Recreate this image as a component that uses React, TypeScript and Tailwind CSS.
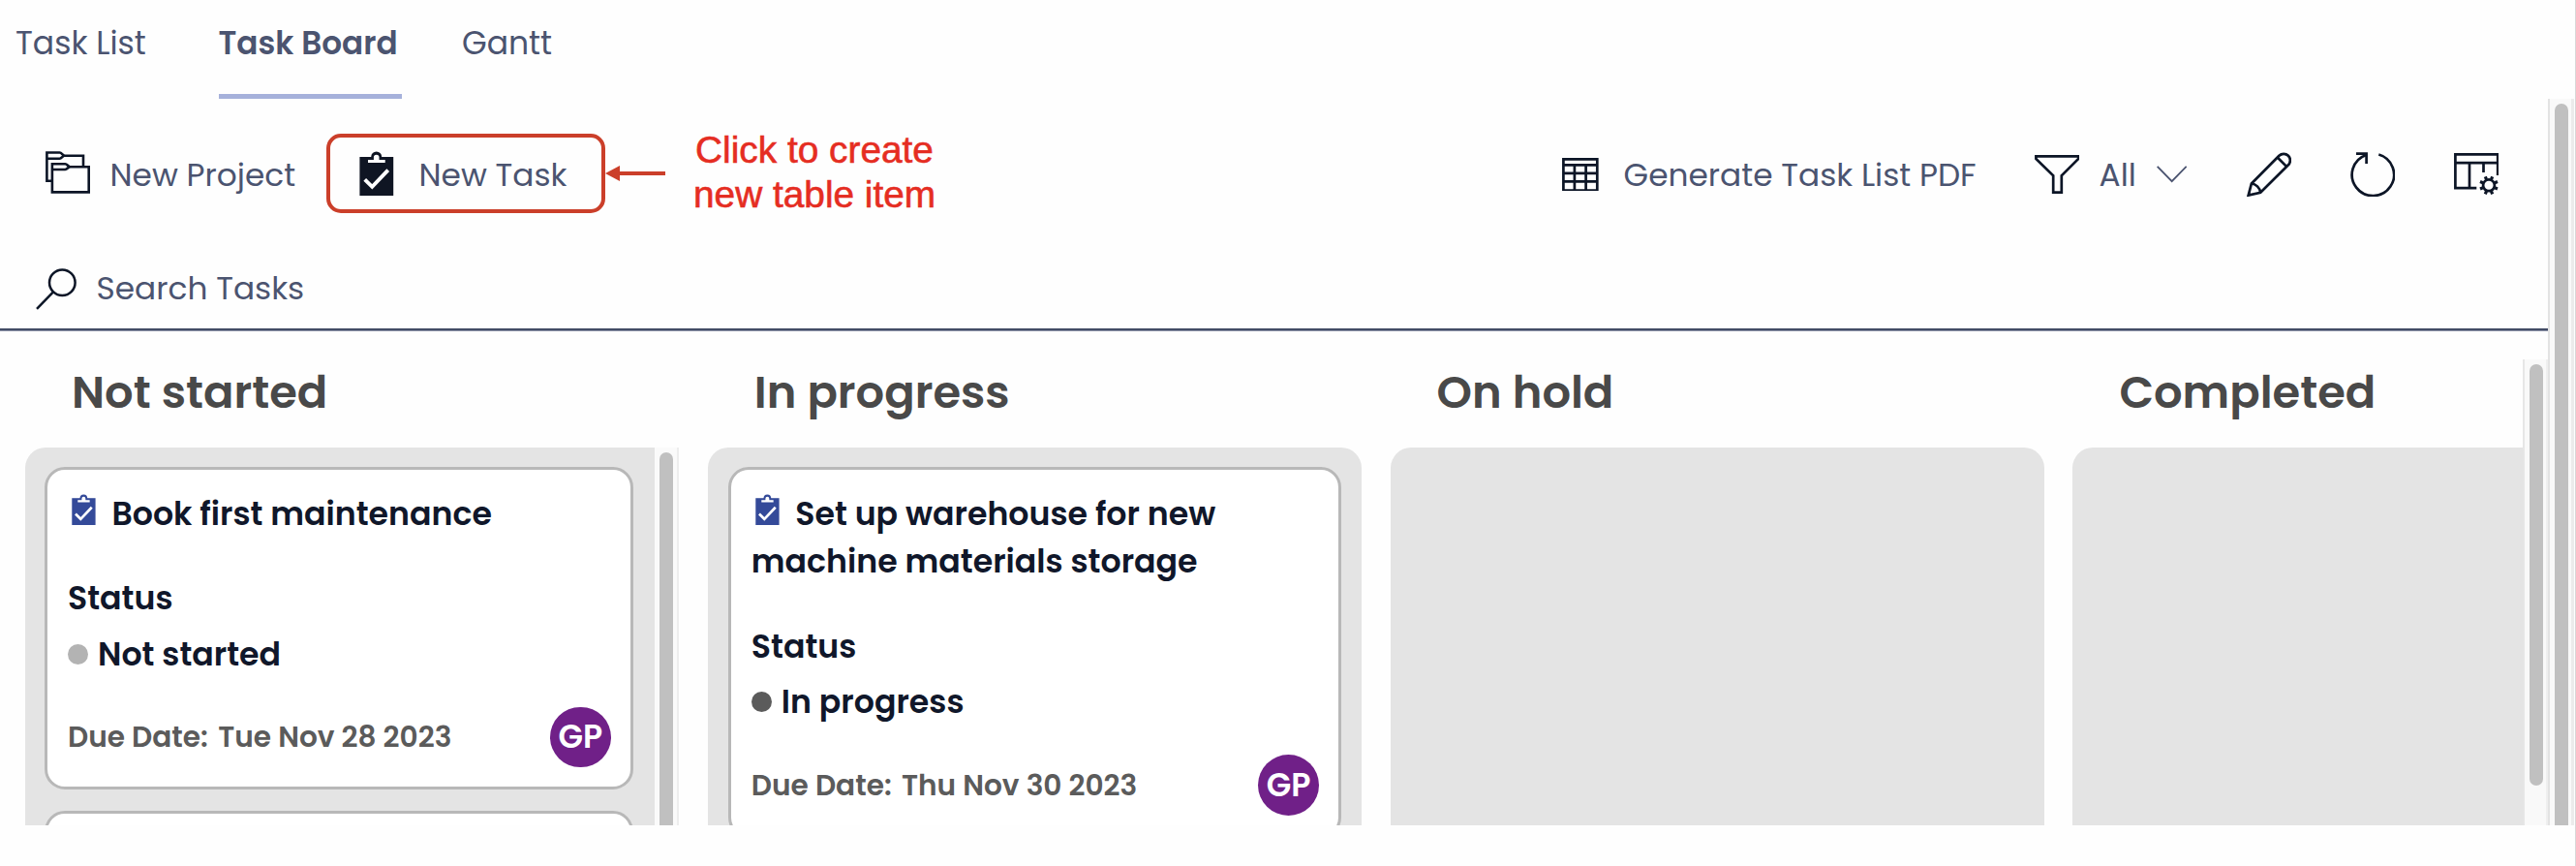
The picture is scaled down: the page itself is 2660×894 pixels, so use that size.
import type { ReactNode } from "react";

function ClipboardIcon({ className }: { className: string }) {
  return (
    <svg viewBox="0 0 35.5 46" className={className}>
      <rect x="0.4" y="6" width="34.8" height="40" fill="currentColor" />
      <path d="M12.2 6a5.5 5.5 0 0 1 11 0v4h-11z" fill="currentColor" />
      <path d="M9 12V9h5.9V6.6a2.8 2.8 0 0 1 5.6 0V9h6.2v3z" fill="#fff" />
      <path d="M5.7 29.3l7.6 7.6 16.4-17.3" fill="none" stroke="#fff" strokeWidth="3.8" />
    </svg>
  );
}

function FoldersIcon() {
  return (
    <svg viewBox="0 0 46 44" className="h-11 w-[46px]" fill="none" stroke="currentColor" strokeWidth="2.6">
      <path d="M6.7 30.8H1.4V1.5h13.2c2.2 0 3 3.2 5 3.2H39v10.8" />
      <path d="M1.4 7.7h13.2c2.2 0 3-3 5-3" />
      <path d="M6.9 13.2h13.4c2.2 0 3 3 5 3h19.4v26.2H6.9z" />
      <path d="M6.9 19h13.4c2.2 0 3-2.8 5-2.8" />
    </svg>
  );
}

function SearchIcon() {
  return (
    <svg viewBox="0 0 43 43" className="size-[43px]" fill="none" stroke="currentColor" strokeWidth="2.5">
      <circle cx="27.3" cy="14.7" r="13.3" />
      <path d="M18 24.3L1 41.8" />
    </svg>
  );
}

function TableIcon() {
  return (
    <svg viewBox="0 0 37.6 34.8" className="h-[34.8px] w-[37.6px]" fill="none" stroke="currentColor" strokeWidth="2.7">
      <path d="M1.4 1.4h34.9v32.1H1.400zM1.4 7.3h35M1.4 15.8h35M1.4 24.3h35M12.9 7.3v26.2M24.6 7.3v26.2" />
    </svg>
  );
}

function FilterIcon() {
  return (
    <svg viewBox="0 0 46.5 40" className="h-10 w-[46.5px]" fill="none" stroke="currentColor" strokeWidth="2.700">
      <path d="M1.4 1.4h43.8V4L27.8 21.2v17.4h-8.600V21.2L1.4 4z" />
    </svg>
  );
}

function ChevronIcon() {
  return (
    <svg viewBox="0 0 31.4 18" className="h-[18px] w-[31.4px]" fill="none" stroke="currentColor" strokeWidth="1.9">
      <path d="M.7.8l15 15.4L30.7.8" />
    </svg>
  );
}

function PencilIcon() {
  return (
    <svg viewBox="0 0 46 46" className="size-[46px]" fill="none" stroke="currentColor" strokeWidth="2.7">
      <path d="M1.7 44.6L4.9 32.5 33.4 3.8A6.7 6.7 0 0 1 42.9 13.3L14.2 41.7z" />
      <path d="M31.7 5.5l9.6 9.6M4.9 32.500c4.5.3 8.6 4.3 9.3 9.2" />
    </svg>
  );
}

function RefreshIcon() {
  return (
    <svg viewBox="0 0 46 46" className="size-[46px]" fill="none" stroke="currentColor" strokeWidth="2.7">
      <path d="M29.3 2.500A21.700 21.700 0 1 1 16.200 2.900" />
      <path d="M6 1.600h10.600V12" />
    </svg>
  );
}

function TableSettingsIcon() {
  return (
    <svg viewBox="0 0 46.5 43.5" className="h-[43.5px] w-[46.5px]" fill="none" stroke="currentColor" strokeWidth="2.7">
      <path d="M23.300 36.200H1.400V1.400h43.800V23M1.400 10.200h43.800M16 10.200v26M30.500 10.200V20" />
      <circle cx="36" cy="33.3" r="5.9" />
      <path
        strokeWidth="3.2"
        d="M42.1 35.800l2.900 1.200M38.500 39.400l1.200 2.900M33.500 39.400l-1.200 2.900M29.900 35.800l-2.900 1.200M29.900 30.800l-2.900-1.200M33.500 27.200l-1.200-2.900M38.500 27.200l1.200-2.900M42.100 30.800l2.900-1.200"
      />
    </svg>
  );
}

type Task = {
  title: string;
  status: string;
  dot: string;
  due: string;
};

function TaskCard({ task }: { task: Task }) {
  return (
    <article className="shrink-0 rounded-[21px] border-3 border-[#b8b8b8] bg-white pt-[20.7px] pr-5 pb-5 pl-[21px] text-[33.2px] leading-[49.5px] font-semibold text-[#10172a]">
      <h3>
        <ClipboardIcon className="mr-[16.6px] ml-[4px] inline h-[32.2px] w-[24.8px] align-baseline text-[#344a99]" />
        {task.title}
      </h3>
      <div className="mt-[38px]">Status</div>
      <div className="mt-2 flex items-center gap-2.5">
        <span className={`size-[21px] rounded-full ${task.dot}`} />
        {task.status}
      </div>
      <div className="mt-[30px] flex h-[62px] items-center text-[29.6px] text-[#5b5b5b]">
        <span className="w-[155.2px]">Due Date:</span>
        <span>{task.due}</span>
        <span className="ml-auto flex size-[62.5px] items-center justify-center rounded-full bg-[#702088] text-[33.2px] font-semibold text-white">
          GP
        </span>
      </div>
    </article>
  );
}

function Column({ title, children, scroll }: { title: string; children?: ReactNode; scroll?: boolean }) {
  return (
    <section className="flex w-[675px] shrink-0 flex-col">
      <h2 className="h-[120px] pt-[28px] pl-[48px] text-[46.4px] leading-[70px] font-semibold text-[#494949]">{title}</h2>
      {scroll ? (
        <div className="flex min-h-0 flex-1">
          <div className="flex w-[650px] flex-col gap-[22px] overflow-hidden rounded-tl-[21px] bg-[#e4e4e4] pt-5 pr-[22.5px] pl-5">
            {children}
          </div>
          <div className="w-[25px] border-r-2 border-[#ededed] bg-[#fafafa] pt-[5px] pl-[5px]">
            <div className="h-full w-3.5 rounded-t-full bg-[#c0c0c0]" />
          </div>
        </div>
      ) : (
        <div className="flex min-h-0 flex-1 flex-col gap-[22px] overflow-hidden rounded-t-[21px] bg-[#e4e4e4] px-[21px] pt-5">
          {children}
        </div>
      )}
    </section>
  );
}

const booking: Task = {
  title: "Book first maintenance",
  status: "Not started",
  dot: "bg-[#b3b3b3]",
  due: "Tue Nov 28 2023",
};

const warehouse: Task = {
  title: "Set up warehouse for new machine materials storage",
  status: "In progress",
  dot: "bg-[#5b5b5b]",
  due: "Thu Nov 30 2023",
};

export default function App() {
  return (
    <div className="flex h-[894px] w-[2660px] flex-col overflow-hidden border-r border-[#d8d8d8] bg-[#fefefe] font-[Poppins,Inter,sans-serif] text-[33px] leading-[50px] text-[#4b5470]">
      <nav className="flex h-[102px] shrink-0 pl-4">
        <div className="w-[209.5px] pt-[19.5px]">Task List</div>
        <div className="w-[189.5px] border-b-5 border-[#a6b1db] pt-[19.5px] text-[32.7px] font-semibold whitespace-nowrap">Task Board</div>
        <div className="ml-[62px] pt-[19.5px]">Gantt</div>
      </nav>

      <div className="flex h-[750px] shrink-0">
        <main className="flex w-[2631px] flex-col">
          <div className="flex h-[156px] shrink-0 items-center pr-[51px] pl-[47px] text-[32.8px] whitespace-nowrap">
            <div className="flex w-[290px] items-center gap-[20.5px]">
              <span className="pb-1 text-[#0c1526]">
                <FoldersIcon />
              </span>
              <span className="pt-px">New Project</span>
            </div>
            <div className="mb-0.5 flex h-[82px] w-[288px] items-center gap-[26px] rounded-[15px] border-4 border-[#cb3f2a] pl-[30px]">
              <ClipboardIcon className="h-[46px] w-[35.5px] text-[#0f1523]" />
              <span className="pt-[3px]">New Task</span>
            </div>
            <svg viewBox="0 0 62 16" className="mb-0.5 h-4 w-[62px]" fill="#cb3f2a">
              <path d="M0 8L15 0v6h47v4H15v6z" />
            </svg>
            <div className="mb-[5px] ml-[29px] w-[250px] text-center font-['Liberation_Sans',Arial,sans-serif] text-[38.8px] leading-[45.7px] text-[#e52d22] [-webkit-text-stroke:0.6px_#e52d22]">
              Click to create
              <br />
              new table item
            </div>

            <div className="ml-auto flex items-center text-[#0c1526]">
              <TableIcon />
              <span className="ml-[26px] w-[424px] pt-px text-[#4b5470]">Generate Task List PDF</span>
              <FilterIcon />
              <span className="ml-[20.5px] w-[59px] pt-px text-[#4b5470]">All</span>
              <span className="text-[#4b5470]">
                <ChevronIcon />
              </span>
              <span className="ml-[61.5px]">
                <PencilIcon />
              </span>
              <span className="ml-[61px]">
                <RefreshIcon />
              </span>
              <span className="ml-[61px]">
                <TableSettingsIcon />
              </span>
            </div>
          </div>

          <div className="flex h-[81px] shrink-0 items-center gap-[19.5px] pl-[37px] text-[32.8px]">
            <span className="text-[#0c1526]">
              <SearchIcon />
            </span>
            <span className="pb-px">Search Tasks</span>
          </div>
          <div className="h-[3px] shrink-0 border-b border-[#8a91a6] bg-[#434c66]" />

          <div className="flex min-h-0 flex-1">
            <div className="flex w-[2605px] gap-[29.8px] overflow-hidden pl-[26px]">
              <Column title="Not started" scroll>
                <TaskCard task={booking} />
                <div className="h-[333px] shrink-0 rounded-[21px] border-3 border-[#b8b8b8] bg-white" />
              </Column>
              <Column title="In progress">
                <TaskCard task={warehouse} />
              </Column>
              <Column title="On hold" />
              <Column title="Completed" />
            </div>
            <div className="mt-[29px] w-[26px] border-r-2 border-l-2 border-[#e6e6e6] border-r-[#efefef] bg-[#f9f9f9] pt-[5px] pl-[5px]">
              <div className="h-[434.5px] w-3.5 rounded-full bg-[#c0c0c0]" />
            </div>
          </div>
        </main>

        <div className="w-[27px] border-r-3 border-l-2 border-[#e3e3e3] border-r-[#ebebeb] bg-[#f9f9f9] pt-[5px] pl-[5px]">
          <div className="h-full w-3.5 rounded-t-full bg-[#c0c0c0]" />
        </div>
      </div>
    </div>
  );
}
